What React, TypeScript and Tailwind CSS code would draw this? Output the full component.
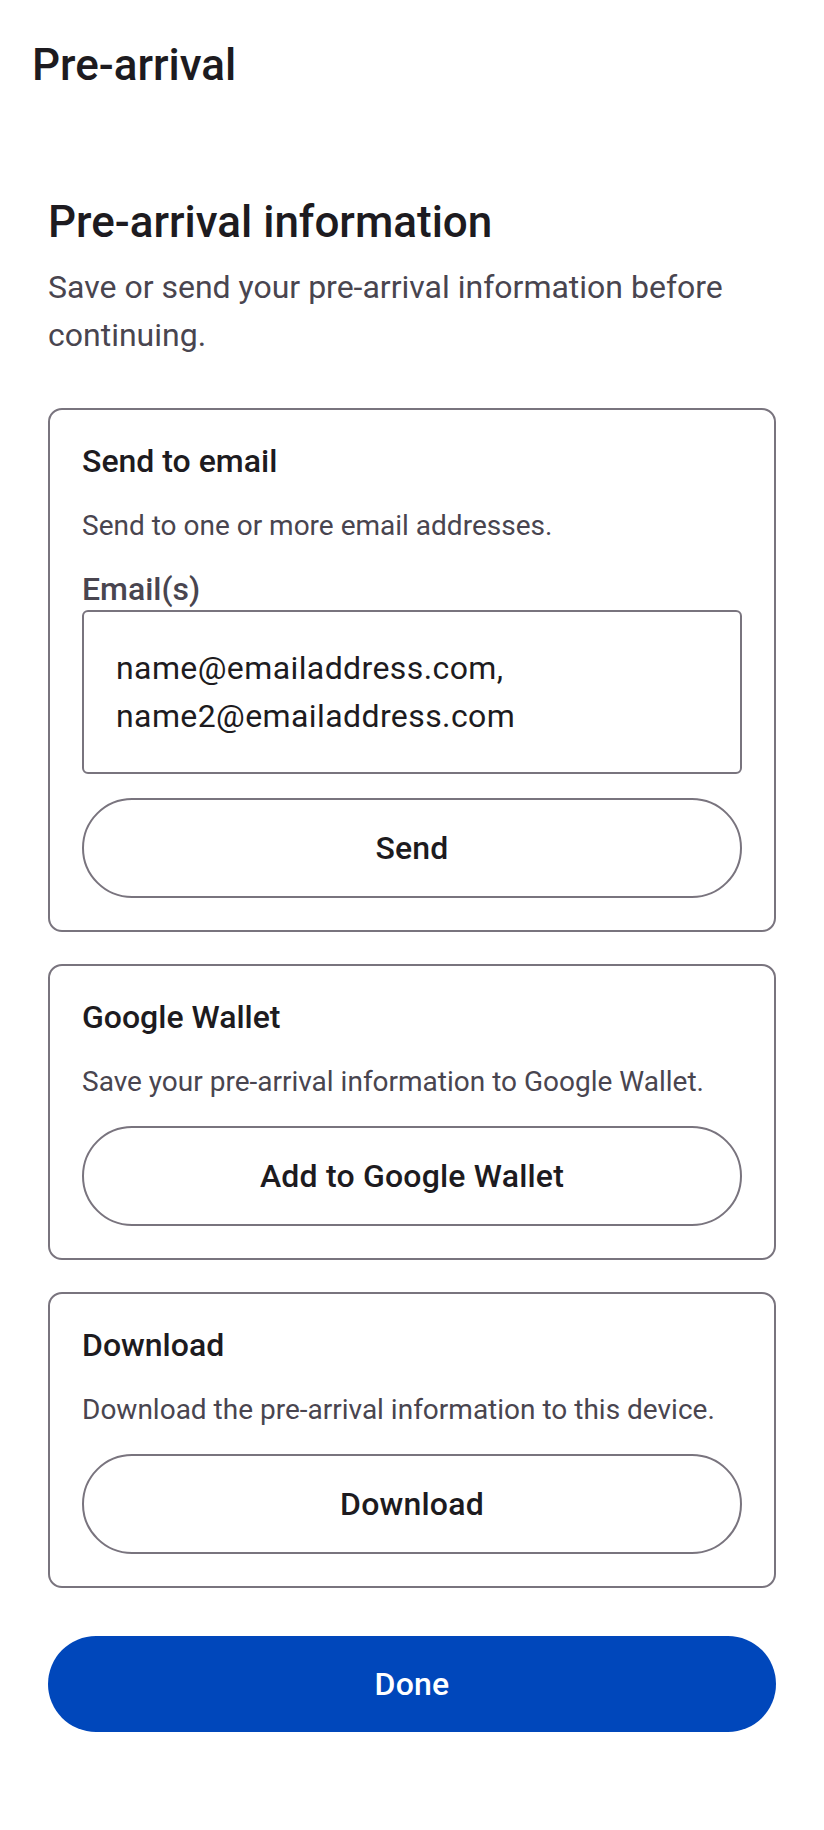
import type React from "react"

const OutlineButton: React.FC<{ label: string; className?: string }> = ({ label, className = "" }) => (
  <button
    type="button"
    className={`w-full h-[100px] rounded-full border-2 border-[#79747e] bg-white text-[32px] leading-[40px] font-medium tracking-[0.2px] text-[#1d1b20] ${className}`}
  >
    {label}
  </button>
)

const Card: React.FC<{ title: string; description: string; children: React.ReactNode }> = ({
  title,
  description,
  children,
}) => (
  <section className="border-2 border-[#79747e] rounded-[14px] px-[32px] pt-[27px] pb-[32px]">
    <h3 className="text-[32px] leading-[48px] font-medium text-[#1d1b20]">{title}</h3>
    <p className="mt-[21px] text-[28px] leading-[40px] text-[#49454f]">{description}</p>
    {children}
  </section>
)

export default function App() {
  return (
    <div className="min-h-[1830px] bg-white font-[Roboto,sans-serif]">
      <header className="px-[32px] pt-[37px]">
        <h1 className="text-[44px] leading-[56px] font-medium text-[#1d1b20]">Pre-arrival</h1>
      </header>

      <main className="px-[48px] pt-[101px] pb-[48px]">
        <h2 className="text-[44px] leading-[56px] font-medium text-[#1d1b20]">Pre-arrival information</h2>
        <p className="mt-[13px] text-[32px] leading-[48px] text-[#49454f]">
          Save or send your pre-arrival information before continuing.
        </p>

        <div className="mt-[49px] flex flex-col gap-[32px]">
          <Card title="Send to email" description="Send to one or more email addresses.">
            <label className="block mt-[23px] text-[32px] leading-[40px] font-medium text-[#49454f]">
              Email(s)
            </label>
            <div className="mt-[1px] border-2 border-[#79747e] rounded-[6px] px-[32px] py-[32px] text-[32px] leading-[48px] tracking-[0.4px] text-[#1d1b20]">
              <div>name@emailaddress.com,</div>
              <div>name2@emailaddress.com</div>
            </div>
            <OutlineButton label="Send" className="mt-[24px]" />
          </Card>

          <Card title="Google Wallet" description="Save your pre-arrival information to Google Wallet.">
            <OutlineButton label="Add to Google Wallet" className="mt-[24px]" />
          </Card>

          <Card title="Download" description="Download the pre-arrival information to this device.">
            <OutlineButton label="Download" className="mt-[24px]" />
          </Card>
        </div>

        <button
          type="button"
          className="mt-[48px] w-full h-[96px] rounded-full bg-[#0047bb] text-white text-[32px] leading-[40px] font-medium tracking-[0.2px]"
        >
          Done
        </button>
      </main>
    </div>
  )
}
